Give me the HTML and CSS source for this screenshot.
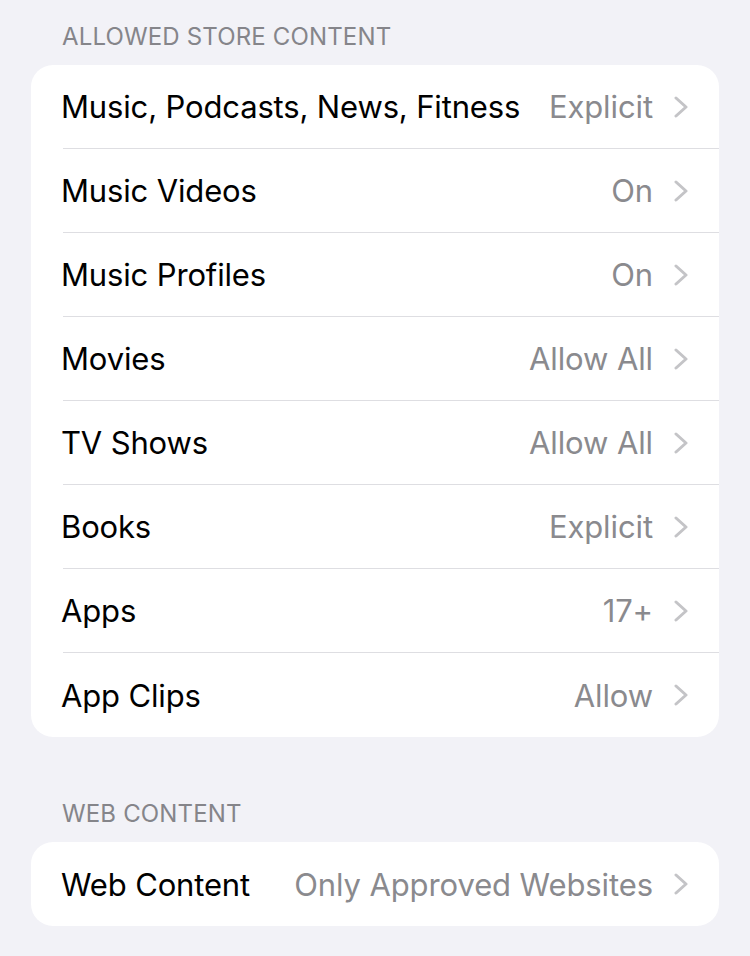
FILE: index.html
```html
<!DOCTYPE html>
<html lang="en">
<head>
  <meta charset="UTF-8" />
  <meta name="viewport" content="width=device-width, initial-scale=1.0" />
  <title>Content &amp; Privacy Restrictions</title>
  <link rel="stylesheet" href="styles.css">
</head>
<body>
<main>
  <div class="section-title">ALLOWED STORE CONTENT</div>
  <ul class="group">
    <li class="row"><span class="label">Music, Podcasts, News, Fitness</span><span class="value">Explicit</span><svg class="chev" viewBox="0 0 16 22"><path d="M3 2l10 9-10 9" /></svg></li>
    <li class="row"><span class="label">Music Videos</span><span class="value">On</span><svg class="chev" viewBox="0 0 16 22"><path d="M3 2l10 9-10 9" /></svg></li>
    <li class="row"><span class="label">Music Profiles</span><span class="value">On</span><svg class="chev" viewBox="0 0 16 22"><path d="M3 2l10 9-10 9" /></svg></li>
    <li class="row"><span class="label">Movies</span><span class="value">Allow All</span><svg class="chev" viewBox="0 0 16 22"><path d="M3 2l10 9-10 9" /></svg></li>
    <li class="row"><span class="label">TV Shows</span><span class="value">Allow All</span><svg class="chev" viewBox="0 0 16 22"><path d="M3 2l10 9-10 9" /></svg></li>
    <li class="row"><span class="label">Books</span><span class="value">Explicit</span><svg class="chev" viewBox="0 0 16 22"><path d="M3 2l10 9-10 9" /></svg></li>
    <li class="row"><span class="label">Apps</span><span class="value">17+</span><svg class="chev" viewBox="0 0 16 22"><path d="M3 2l10 9-10 9" /></svg></li>
    <li class="row"><span class="label">App Clips</span><span class="value">Allow</span><svg class="chev" viewBox="0 0 16 22"><path d="M3 2l10 9-10 9" /></svg></li>
  </ul>

  <div class="section-title second">WEB CONTENT</div>
  <ul class="group">
    <li class="row"><span class="label">Web Content</span><span class="value">Only Approved Websites</span><svg class="chev" viewBox="0 0 16 22"><path d="M3 2l10 9-10 9" /></svg></li>
  </ul>
</main>
</body>
</html>
```

FILE: styles.css
```css
* {
  padding: 0;
  margin: 0;
  box-sizing: border-box;
}
body {
  background: #f2f2f7;
  height: 100vh;
  font-family: Inter, "Liberation Sans", sans-serif;
  -webkit-font-smoothing: antialiased;
}
main {
  padding: 22px 31px 0 31px;
}
.section-title {
  padding-left: 31px;
  height: 43px;
  font-size: 24px;
  line-height: 30px;
  color: #85858a;
  letter-spacing: 0.15px;
}
.section-title.second {
  margin-top: 62px;
}
.group {
  list-style: none;
  background: #fff;
  border-radius: 22px;
  overflow: hidden;
}
.row {
  display: flex;
  align-items: center;
  height: 84px;
  margin-left: 32px;
  padding-right: 30px;
  border-bottom: 1px solid #dedee2;
}
.row:last-child {
  border-bottom: 0;
}
.label {
  flex: 1;
  margin-left: -2px;
  font-size: 31px;
  color: #000;
  letter-spacing: -0.15px;
}
.value {
  font-size: 31px;
  color: #8a8a8e;
  letter-spacing: -0.1px;
  margin-right: 20px;
}
.chev {
  width: 16px;
  height: 22px;
  fill: none;
  stroke: #c4c4c7;
  stroke-width: 3;
  stroke-linecap: round;
  stroke-linejoin: round;
}
```
